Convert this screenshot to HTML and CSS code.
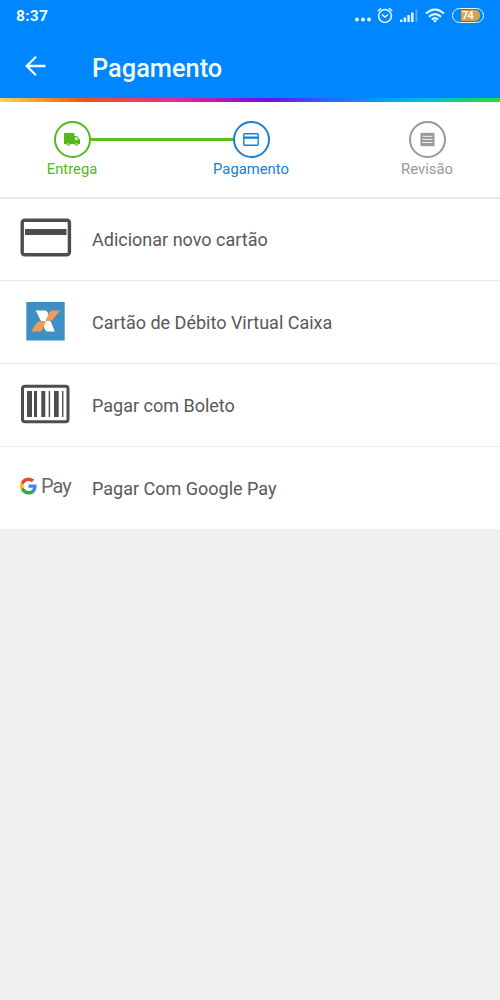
FILE: index.html
```
<!DOCTYPE html>
<html lang="pt-BR">
<head>
<meta charset="utf-8">
<meta name="viewport" content="width=device-width, initial-scale=1">
<title>Pagamento</title>
<link rel="stylesheet" href="styles.css">
</head>
<body>
<header class="header">
  <div class="status">
    <span class="clock">8:37</span>
    <div class="status-icons">
      <svg class="dots" width="16" height="18" viewBox="0 0 16 18"><circle cx="2" cy="13.500" r="1.900"/><circle cx="8" cy="13.500" r="1.900"/><circle cx="14" cy="13.500" r="1.900"/></svg>
      <svg class="alarm" width="16" height="18" viewBox="0 0 16 18"><circle cx="8" cy="10" r="6.400"/><path d="M.8 5 4 2.200M15.200 5 12 2.200M5 8.500l3 2.500 3-2.500"/></svg>
      <svg class="signal" width="18" height="18" viewBox="0 0 18 18"><path d="M0 13.500h2.400V16H0zM3.700 11.500h2.400V16H3.700zM7.400 9h2.400v7H7.400zM11.100 6.500h2.400V16h-2.400z"/><path class="faint" d="M15.500 3.500h1.800V16h-1.800z"/></svg>
      <svg class="wifi" width="20" height="18" viewBox="0 0 20 18"><path d="M1 7.500Q10-.5 19 7.500M4 10.700Q10 5.500 16 10.700M6.800 13.500Q10 10.800 13.200 13.500"/><path class="wifi-dot" d="m8 14.700 2 1.900 2-1.900q-2-1.500-4 0z"/></svg>
      <div class="battery"><span class="charge">74</span></div>
    </div>
  </div>
  <div class="appbar">
    <svg class="back" width="22" height="22" viewBox="0 0 22 22"><path d="M20.500 11H2M11 1.700 1.700 11l9.300 9.300"/></svg>
    <h1 class="title">Pagamento</h1>
  </div>
</header>
<div class="rainbow"></div>
<nav class="steps">
  <div class="step done">
    <div class="ring"><svg width="18" height="16" viewBox="0 0 18 16"><path fill="currentColor" d="M2 1h8.500q1 0 1 1v2h2.300l3.200 3.800V12h-1.400a2.300 2.300 0 0 1-4.500 0H7.600a2.300 2.300 0 0 1-4.500 0H1V2q0-1 1-1z"/><path class="window" d="M12.200 5.300h1.300l1.800 2.400h-3.100z"/><circle class="window" cx="5.350" cy="12" r=".8"/><circle class="window" cx="13.350" cy="12" r=".8"/></svg></div>
    <span>Entrega</span>
  </div>
  <div class="connector"></div>
  <div class="step current">
    <div class="ring"><svg width="16" height="13" viewBox="0 0 16 13"><rect x=".8" y=".8" width="14.400" height="11.400" rx="1" fill="none" stroke="currentColor" stroke-width="1.400"/><path fill="currentColor" d="M1 3.500h14v2.300H1z"/></svg></div>
    <span>Pagamento</span>
  </div>
  <div class="gap"></div>
  <div class="step pending">
    <div class="ring"><svg width="15" height="15" viewBox="0 0 15 15"><path fill="currentColor" d="m.5.500 1.200.8L2.900.500l1.200.8L5.300.500l1.100.8L7.500.500l1.100.8L9.700.500l1.200.8L12.100.500l1.200.8L14.500.500v14l-1.200-.8-1.200.8-1.200-.8-1.200.8-1.100-.8-1.100.8-1.100-.8-1.100.8-1.200-.8-1.200.8-1.200-.8-1.200.8z"/><path stroke="#fff" stroke-width=".9" d="M2.500 4.300h10M2.500 7.400h10M2.500 10.500h10"/></svg></div>
    <span>Revisão</span>
  </div>
</nav>
<main class="options">
  <div class="option">
    <div class="art"><svg width="52" height="40" viewBox="0 0 52 40"><rect x="2.200" y="2.200" width="47.200" height="34.600" rx="2.500" fill="none" stroke="#4d4d4f" stroke-width="3.400"/><path fill="#4d4d4f" d="M5 11h41.500v6H5z"/></svg></div>
    <span>Adicionar novo cartão</span>
  </div>
  <div class="option">
    <div class="art"><svg width="52" height="40" viewBox="0 0 52 40"><path fill="#3d8fc4" d="M6.300 1h38.400v38.500H6.300z"/><path fill="#fff" d="M15.800 9.500h9.400q1.500 0 2.200 1.600l2.400 5.500-3.300 3.700h-4.700q-.8 0-1.300-1zM25 20h4.600q1 0 1.400 1l3.800 9.500h-7.500q-1.500 0-2.200-1.700l-2.300-5.300z"/><path fill="#f39a50" d="M31.500 9.500h8.800L33 18.300q-1.400 1.700-3.500 1.700h-4l3.700-8.400q1-2.100 2.300-2.100zM19 20.500h7l-3.600 8q-.9 2-3 2h-8.200l5.300-8.500q1-1.500 2.500-1.500z"/></svg></div>
    <span>Cartão de Débito Virtual Caixa</span>
  </div>
  <div class="option">
    <div class="art"><svg width="52" height="40" viewBox="0 0 52 40"><rect x="2.500" y="2.200" width="45.500" height="35.600" rx="2.500" fill="none" stroke="#4d4d4f" stroke-width="3"/><path fill="#4d4d4f" d="M7 7h5v26H7zM14 7h3v26h-3zM21.300 7h4v26h-4zM28.700 7h1.400v26h-1.400zM34 7h4.700v26H34zM42 7h1.400v26H42z"/></svg></div>
    <span>Pagar com Boleto</span>
  </div>
  <div class="option">
    <div class="art gpay">
      <svg width="17" height="18" viewBox="0 0 18 18"><path fill="#4285f4" d="M17.600 9.200c0-.6-.1-1.300-.2-1.900H9v3.500h4.800a4.100 4.100 0 0 1-1.800 2.700v2.300h2.900c1.700-1.600 2.700-3.900 2.700-6.600z"/><path fill="#34a853" d="M9 18c2.400 0 4.500-.8 6-2.200l-3-2.300c-.8.600-1.800.9-3 .9-2.300 0-4.300-1.600-5-3.700H1V13c1.500 3 4.500 5 8 5z"/><path fill="#fbbc05" d="M4 10.700a5.400 5.400 0 0 1 0-3.400V5H1a9 9 0 0 0 0 8z"/><path fill="#ea4335" d="M9 3.600c1.300 0 2.500.5 3.400 1.400L15 2.400A9 9 0 0 0 1 5l3 2.300c.7-2.100 2.700-3.700 5-3.700z"/></svg>
      <span class="pay">Pay</span>
    </div>
    <span>Pagar Com Google Pay</span>
  </div>
</main>
</body>
</html>
```
FILE: styles.css
```
* { box-sizing: border-box; }
body {
  margin: 0;
  min-height: 1000px;
  background: #f0f0f0;
  color: #58585a;
  font-family: Roboto, "Liberation Sans", sans-serif;
}
svg { display: block; flex: none; }
.header { height: 98px; background: #0086ff; color: #effcff; }
.status {
  display: flex;
  justify-content: space-between;
  height: 32px;
  padding: 6px 16px 0;
}
.clock { font-size: 15.5px; line-height: 20px; font-weight: 700; letter-spacing: .3px; }
.status-icons { display: flex; height: 18px; align-items: center; }
.dots { fill: currentColor; margin-right: 6px; }
.alarm { fill: none; stroke: currentColor; stroke-width: 1.5; margin-right: 7px; }
.signal { fill: currentColor; margin-right: 7px; }
.faint { opacity: .35; }
.wifi { fill: none; stroke: currentColor; stroke-width: 2; margin-right: 7px; }
.wifi-dot { fill: currentColor; stroke: none; }
.battery {
  width: 32px;
  height: 15px;
  padding: 1px 3px 1px 8px;
  border: 1.5px solid #dff5f7;
  border-radius: 8px;
}
.charge {
  display: block;
  width: 19px;
  height: 11px;
  padding-left: 1px;
  border-radius: 1px 5px 5px 1px;
  background: #d9a34b;
  font-size: 11px;
  line-height: 11px;
  font-weight: 700;
  letter-spacing: -.7px;
}
.appbar { display: flex; align-items: center; height: 66px; padding: 3px 25px 0; }
.back { fill: none; stroke: currentColor; stroke-width: 2.3; margin-top: -1px; }
.title { margin: 2px 0 0 45px; font-size: 25.4px; line-height: 32px; font-weight: 500; }
.rainbow {
  height: 4px;
  background: linear-gradient(90deg, #f2d45c 0, #f59a2b 8%, #ea5418 17%, #ee4058 26%, #e725a0 36%, #9b12c8 47%, #6a12e8 54%, #2866fa 66%, #00a6fa 78%, #00bedb 86%, #19d568 95%, #2ddc35 100%);
}
.steps {
  display: grid;
  grid-template-columns: 80px 99px 80px 96px 80px;
  height: 97px;
  padding: 19px 0 0 32px;
  border-bottom: 2px solid #e8e8e8;
  background: #fff;
}
.step {
  display: flex;
  flex-direction: column;
  align-items: center;
  font-size: 14.8px;
  line-height: 18px;
}
.ring {
  display: flex;
  align-items: center;
  justify-content: center;
  width: 37px;
  height: 37px;
  margin-bottom: 2px;
  border: 2px solid;
  border-radius: 50%;
}
.done { color: #56b81d; }
.current { color: #1680d8; }
.pending { color: #989898; }
.window { fill: #fff; }
.connector { height: 2.5px; margin: 17px -22px 0; background: #5bc01d; }
.options { background: #fff; }
.option {
  display: flex;
  align-items: center;
  height: 83px;
  padding: 1px 0 0 20px;
  border-bottom: 1px solid #ececec;
  font-size: 18px;
  line-height: 24px;
}
.option:first-child { height: 82px; padding-top: 0; }
.option:last-child { border-bottom: 0; height: 82px; }
.art { width: 52px; margin: -3px 20px 0 0; }
.gpay { display: flex; align-items: center; margin-top: -6px; }
.pay { margin-left: 4px; color: #66696d; font-size: 20px; letter-spacing: -1px; }
```
